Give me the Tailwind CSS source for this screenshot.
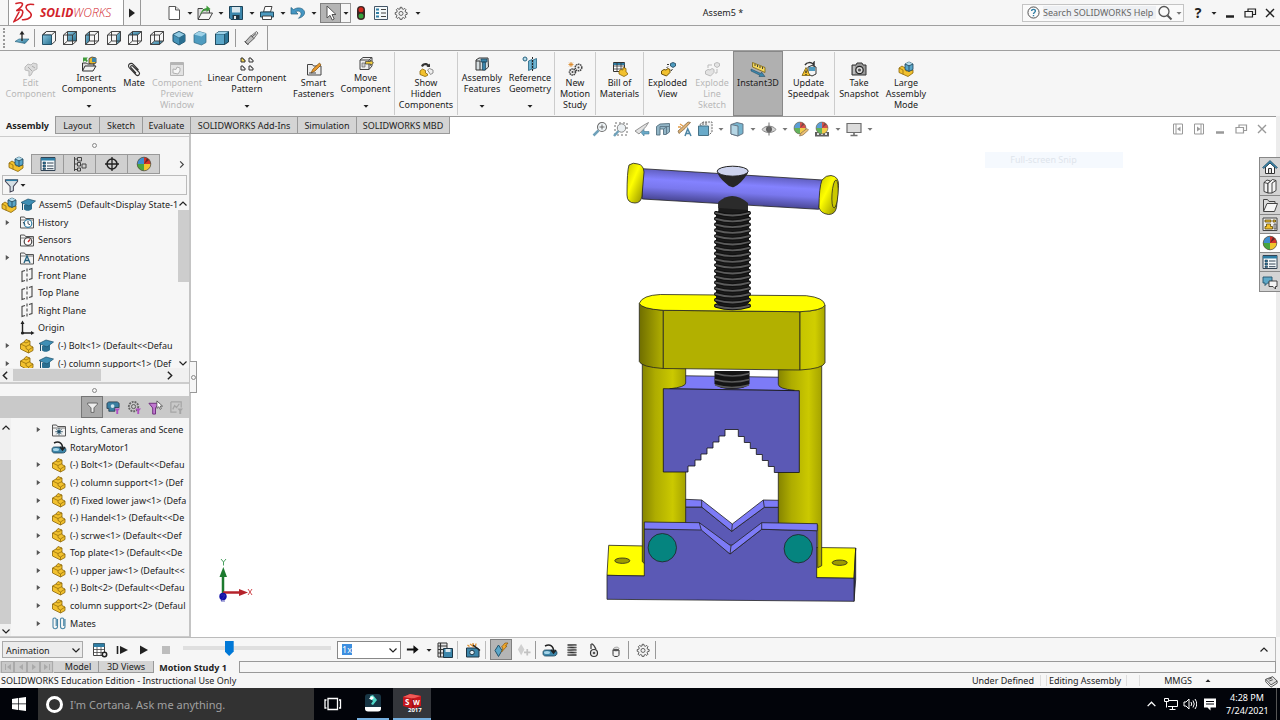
<!DOCTYPE html>
<html lang="en">
  <head>
    <meta charset="UTF-8" />
    <meta name="viewport" content="width=device-width, initial-scale=1.0" />
    <script src="https://cdn.jsdelivr.net/npm/@tailwindcss/browser@4"></script>
    <title>SOLIDWORKS | Assem5</title>
  </head>
  <body class="h-screen flex flex-col overflow-hidden bg-[#f6f6f6] text-[9px] leading-[11px] text-[#222] font-['Noto_Sans','Open_Sans',sans-serif]">

    <!-- icon sprite -->
    <svg class="absolute size-0" xmlns="http://www.w3.org/2000/svg">
      <defs>
        <linearGradient id="blue" x1="0" y1="0" x2="1" y2="1"><stop offset="0" stop-color="#8cc8e2" /><stop offset="1" stop-color="#27708f" /></linearGradient>
        <linearGradient id="col" x1="0" x2="1"><stop offset="0" stop-color="#858400" /><stop offset=".3" stop-color="#aeac00" /><stop offset=".7" stop-color="#cbc900" /><stop offset="1" stop-color="#a5a300" /></linearGradient>
        <linearGradient id="plateL" x1="0" x2="1"><stop offset="0" stop-color="#6f6e00" /><stop offset="1" stop-color="#b2b000" /></linearGradient>
        <linearGradient id="plateR" x1="0" x2="1"><stop offset="0" stop-color="#c6c400" /><stop offset=".6" stop-color="#d0ce00" /><stop offset="1" stop-color="#a9a700" /></linearGradient>
        <linearGradient id="bar" gradientUnits="userSpaceOnUse" x1="734" y1="173" x2="732" y2="205"><stop offset="0" stop-color="#5c5ab8" /><stop offset=".35" stop-color="#8482ff" /><stop offset=".6" stop-color="#7a78ee" /><stop offset="1" stop-color="#45438e" /></linearGradient>
        <linearGradient id="cap" x1="0" y1="0" x2="1" y2="1"><stop offset="0" stop-color="#c8c600" /><stop offset=".4" stop-color="#ffff00" /><stop offset="1" stop-color="#8a8800" /></linearGradient>
      </defs>

      <symbol id="down" viewBox="0 0 8 8"><path d="M1.500 3h5L4 5.800z" fill="currentColor" /></symbol>
      <symbol id="tri" viewBox="0 0 8 8"><path d="M2 1v6l4-3z" fill="currentColor" /></symbol>
      <symbol id="chev-down" viewBox="0 0 10 10"><path d="M1.500 3.500 5 7l3.500-3.500" fill="none" stroke="currentColor" stroke-width="1.200" /></symbol>
      <symbol id="chev-up" viewBox="0 0 10 10"><path d="M1.500 6.500 5 3l3.500 3.500" fill="none" stroke="currentColor" stroke-width="1.200" /></symbol>
      <symbol id="chev-left" viewBox="0 0 10 10"><path d="M6.500 1.500 3 5l3.500 3.500" fill="none" stroke="currentColor" stroke-width="1.300" /></symbol>
      <symbol id="chev-right" viewBox="0 0 10 10"><path d="M3.500 1.500 7 5 3.500 8.500" fill="none" stroke="currentColor" stroke-width="1.300" /></symbol>

      <!-- standard toolbar -->
      <symbol id="new" viewBox="0 0 16 16"><path d="M3 1.500h6.500L13.500 5v9.500H3z" fill="#fff" stroke="#555" /><path d="M9.500 1.500V5h4" fill="#ddd" stroke="#555" /></symbol>
      <symbol id="open" viewBox="0 0 16 16"><path d="M1 14V3.500h4.500L7 5h5.500v3" fill="#ddd" stroke="#444" /><path d="M1 14.500 4.500 8H15.500L12 14.500z" fill="#f4f4f4" stroke="#444" /><path d="M3 10c1-4 3-6.500 6.500-7V.5L13.500 4 9.500 7V5C7 5.200 5 7 3 10z" fill="#3f9b3b" /></symbol>
      <symbol id="save" viewBox="0 0 16 16"><path d="M1.500 1.500h13v13H3l-1.500-1.500z" fill="#3c86ab" stroke="#1d4358" /><path d="M4 2h8v5.500H4z" fill="#d8e7ee" /><path d="M4.500 10h7v4h-7z" fill="#1e3745" /><path d="M6 11h2v3H6z" fill="#e8e8e8" /></symbol>
      <symbol id="print" viewBox="0 0 16 16"><path d="M4.500 7 6 1.500h7L11.500 7z" fill="#fff" stroke="#444" /><path d="M1.500 7h13v5h-13z" fill="#4d9bc0" stroke="#224b5f" /><path d="M3.500 11h9v3.500h-9z" fill="#fff" stroke="#444" /></symbol>
      <symbol id="undo" viewBox="0 0 16 16"><path d="M1 2.500v6.500h7L5.700 6.700c3-1.700 6.300.3 5.300 3.300-.4 1.200-1.400 2.300-2.500 3.300 4-1 6.500-3.500 6-6.500C13.500 3 8 1.500 3.500 4.600z" fill="#4597c4" stroke="#23607f" stroke-width=".7" /></symbol>
      <symbol id="cursor" viewBox="0 0 16 16"><path d="M4 1v12l3-2.700 2.200 4.700 2-1-2.200-4.500H13z" fill="#fff" stroke="#555" /></symbol>
      <symbol id="light" viewBox="0 0 16 16"><rect x="4" y="1" width="8" height="14" rx="4" fill="#3b2523" /><circle cx="8" cy="4.700" r="2.500" fill="#d5281d" /><circle cx="8" cy="11" r="2.500" fill="#35a23c" /></symbol>
      <symbol id="props" viewBox="0 0 16 16"><path d="M1.500 1.500h13v13h-13z" fill="#f4f9fb" stroke="#456" /><path d="M3 3.500h3v2H3zM3 7h3v2H3zM3 10.500h3v2H3z" fill="#2f7ea5" /><path d="M8 4.500h5M8 8h5M8 11.500h5" stroke="#444" /></symbol>
      <symbol id="gear" viewBox="0 0 16 16"><path d="M7 1.500h2l.4 1.800 1.300.5 1.600-1 1.400 1.400-1 1.600.5 1.300 1.800.4v2l-1.800.4-.5 1.300 1 1.600-1.400 1.400-1.600-1-1.300.5-.4 1.800H7l-.4-1.800-1.300-.5-1.600 1-1.400-1.400 1-1.600-.5-1.300L1.400 9.500v-2l1.800-.4.500-1.300-1-1.600 1.400-1.400 1.600 1 1.300-.5z" fill="#f1f1f1" stroke="#555" stroke-width="1.100" /><circle cx="8" cy="8.500" r="2.300" fill="none" stroke="#555" /></symbol>

      <!-- view cubes -->
      <symbol id="normal" viewBox="0 0 16 16"><path d="M1 11.500 5 9h10l-4 4.500z" fill="url(#blue)" stroke="#1f5a76" stroke-width=".6" /><path d="M8 11V3" stroke="#222" stroke-width="1.300" /><path d="M5.500 4.500 8 .8l2.500 3.700z" fill="#222" /></symbol>
      <symbol id="wire" viewBox="0 0 16 16"><path d="M1.500 5h9v9.500h-9zM5.500 1.500h9V11h-9zM1.500 5l4-3.500M10.500 5l4-3.500M10.500 14.500l4-3.500M1.500 14.500l4-3.500" fill="none" stroke="#333" stroke-width=".9" /></symbol>
      <symbol id="cube-front" viewBox="0 0 16 16"><path d="M5.500 1.500h9V11l-4 3.500V5h-9z" fill="none" stroke="#333" stroke-width=".9" /><path d="M1.500 5h9v9.500h-9z" fill="url(#blue)" stroke="#24536b" /><path d="M1.500 5l4-3.500M10.500 5l4-3.500" stroke="#333" stroke-width=".9" /></symbol>
      <symbol id="cube-back" viewBox="0 0 16 16"><path d="M5.500 1.500h9V11h-9z" fill="url(#blue)" /><use href="#wire" /></symbol>
      <symbol id="cube-left" viewBox="0 0 16 16"><path d="M1.500 5l4-3.500V11l-4 3.500z" fill="url(#blue)" /><use href="#wire" /></symbol>
      <symbol id="cube-right" viewBox="0 0 16 16"><path d="M10.500 5l4-3.500V11l-4 3.500z" fill="url(#blue)" /><use href="#wire" /></symbol>
      <symbol id="cube-top" viewBox="0 0 16 16"><path d="M1.500 5l4-3.500h9L10.500 5z" fill="url(#blue)" /><use href="#wire" /></symbol>
      <symbol id="cube-bottom" viewBox="0 0 16 16"><path d="M1.500 14.500l4-3.500h9l-4 3.500z" fill="url(#blue)" /><use href="#wire" /></symbol>
      <symbol id="cube-iso" viewBox="0 0 16 16"><path d="M8 1.500 14 4.500v7L8 15l-6-3.500v-7z" fill="#4593b8" stroke="#1f4f68" /><path d="M8 1.500 14 4.500 8 8 2 4.500z" fill="#92cbe4" stroke="#1f4f68" stroke-width=".6" /><path d="M8 8v7l6-3.500v-7z" fill="#2a6f91" /></symbol>
      <symbol id="cube-tri" viewBox="0 0 16 16"><path d="M7 1.500 14 3.500v9L9.500 15 2 12.500v-8z" fill="#4f9cc0" stroke="#2d647e" stroke-width=".7" /><path d="M7 1.500 14 3.500 9.500 6.500 2 4.500z" fill="#9ed2e8" /></symbol>
      <symbol id="cube-di" viewBox="0 0 16 16"><path d="M5 1.500h9.500V12l-4 2.500h-9V4z" fill="#2d7596" stroke="#173c4e" /><path d="M1.500 4h9v10.500h-9z" fill="#5aa6c8" stroke="#173c4e" stroke-width=".7" /><path d="M5 1.500h9.500L10.500 4h-9z" fill="#9ed2e8" /></symbol>
      <symbol id="torch" viewBox="0 0 16 16"><path d="M8 6 13.500 1.500 15 3 10.500 9z" fill="#ddd" stroke="#555" stroke-width=".8" /><path d="M8 5.500 11 8.500 4.500 14.500 2 12z" fill="#bbb" stroke="#444" stroke-width=".8" /><path d="M1.500 11l4 4M9 7l4-3.500" stroke="#555" /></symbol>

      <!-- parts -->
      <symbol id="part" viewBox="0 0 16 16"><path d="M1.500 6 5 4l2-2.500 4 1.500v4.500l3 1.500v3.500L9.500 15 1.500 11z" fill="#f2c12e" stroke="#8a6508" stroke-width=".8" /><path d="M1.500 6 7 8.500v2L9.500 12l4.500-3M9.500 12v3M7 8.500 11 6.500M5 4l2 1 4-2" fill="none" stroke="#8a6508" stroke-width=".7" /></symbol>
      <symbol id="asm" viewBox="0 0 16 16"><path d="M1 7 4 5l4 2.500V10l7-1v3l-5 3.500L1 11.500z" fill="#f2c12e" stroke="#8a6508" stroke-width=".8" /><path d="M7 3l4-2 4 2v5.500l-4 2-4-2z" fill="#5aa6c8" stroke="#1d4358" stroke-width=".8" /><path d="M7 3l4-2 4 2-4 1.800z" fill="#b5dcec" /><path d="M7 3l4 1.800L15 3M11 4.800v5.700" fill="none" stroke="#1d4358" stroke-width=".8" /><path d="M1 7l4 2v4.300" fill="none" stroke="#8a6508" stroke-width=".7" /></symbol>
      <symbol id="hat" viewBox="0 0 16 16"><path d="M4 8v4.500c2.500 2 6 1.500 8-.5V7z" fill="#2a6f91" /><path d="M1 5.500 8 2l7.500 2L9 9z" fill="#3f8fb5" stroke="#1a4d68" stroke-width=".7" /><path d="M2.500 6.200V13" stroke="#1a4d68" /></symbol>
      <symbol id="folder" viewBox="0 0 16 16"><path d="M1.500 14V3h4l1 1.500h8V14z" fill="#f4f4f4" stroke="#555" /><path d="M1.500 6h13" stroke="#555" stroke-width=".8" /></symbol>
      <symbol id="history" viewBox="0 0 16 16"><use href="#folder" /><circle cx="9" cy="9.500" r="3.800" fill="#fff" stroke="#2f7ea5" stroke-width="1.200" /><path d="M9 7v2.700l2 1M4 8l2 2.500" stroke="#234" stroke-width=".9" fill="none" /></symbol>
      <symbol id="sensors" viewBox="0 0 16 16"><use href="#folder" /><circle cx="9" cy="9.500" r="3.800" fill="#fff" stroke="#444" stroke-width="1.200" /><path d="M9 10l2-2.500" stroke="#c22" stroke-width="1.300" /></symbol>
      <symbol id="annot" viewBox="0 0 16 16"><use href="#folder" /><path d="M5 13l3-7 3 7M6.200 10.500h3.700" stroke="#24627f" stroke-width="1.300" fill="none" /></symbol>
      <symbol id="lights" viewBox="0 0 16 16"><use href="#folder" /><circle cx="8" cy="9.700" r="1.700" fill="#2f7ea5" /><path d="M8 6v7.500M4.300 9.700h7.500M5.400 7.100l5.200 5.200M10.600 7.100l-5.200 5.200" stroke="#24475a" stroke-width=".8" /></symbol>
      <symbol id="plane" viewBox="0 0 16 16"><path d="M6 3.500 3 4.500v10l3-1M10 2.500l3-1v10l-3 1M8 1.500v3M8 6.500v3M8 11.500v3" fill="none" stroke="#444" stroke-width="1.100" /></symbol>
      <symbol id="origin" viewBox="0 0 16 16"><path d="M3.500 3v10H14" fill="none" stroke="#222" stroke-width="1.400" /><path d="M1.500 4 3.500.5l2 3.500zM12 11l3.500 2-3.500 2z" fill="#222" /><circle cx="3.500" cy="13" r="1.600" fill="#222" /></symbol>
      <symbol id="motor" viewBox="0 0 16 16"><path d="M1 10.500c0-1.600 1-2.500 2.500-2.500h8c2 0 3.500 1 3.500 3s-1.500 3-3.500 3h-8C2 14 1 13 1 11.500z" fill="#3d87ab" stroke="#1d4358" stroke-width=".8" /><ellipse cx="5" cy="10.500" rx="3" ry="1.500" fill="#a5d4e8" /><path d="M3 4c5-2.500 9 0 8.500 6M9 8l2.500 3L14 8" fill="none" stroke="#222" stroke-width="1.500" /></symbol>
      <symbol id="mates" viewBox="0 0 16 16"><path d="M6.500 4v7.500a2 2 0 0 1-4.500 0V4a1.800 1.800 0 0 1 3.200 0v7M14 4v7.500a2 2 0 0 1-4.500 0V4a1.800 1.800 0 0 1 3.200 0v7" fill="none" stroke="#4a86a6" stroke-width="1.100" /></symbol>
      <symbol id="config" viewBox="0 0 16 16"><path d="M2.500 1v14M2.500 3h3M2.500 8h3M2.500 13.500h3M5.500 1.500h4V5h-4zM5.500 6.500h3V10h-3zM10 8h4v4h-4zM5.500 12h3v3h-3z" fill="none" stroke="#444" /></symbol>
      <symbol id="target" viewBox="0 0 16 16"><circle cx="8" cy="8" r="5" fill="none" stroke="#222" stroke-width="1.500" /><path d="M8 1v14M1 8h14" stroke="#222" stroke-width="1.300" /></symbol>
      <symbol id="ball" viewBox="0 0 16 16"><circle cx="8" cy="8" r="6.800" fill="#f0c42c" /><path d="M8 8V1.200A6.800 6.800 0 0 0 1.200 8z" fill="#3f8ed0" /><path d="M8 8V1.200A6.800 6.800 0 0 1 14.800 8z" fill="#d3312b" /><path d="M8 8H1.200A6.800 6.800 0 0 0 8 14.800z" fill="#4aa63f" /><path d="M8 8l3-6 2 2z" fill="#222" opacity=".6" /><circle cx="8" cy="8" r="6.800" fill="none" stroke="#444" stroke-width=".7" /></symbol>
      <symbol id="funnel" viewBox="0 0 16 16"><path d="M1.500 2h13v1.500L10 9v4.500L6.500 15V9L1.500 3.500z" fill="#d5dfe4" stroke="#445" stroke-width="1.100" /><path d="M2 2.500h12" stroke="#2f7ea5" stroke-width="1.500" /></symbol>
      <symbol id="funnel-plain" viewBox="0 0 16 16"><path d="M2 2.500h12V4L9.800 8.500V14H6.200V8.500L2 4z" fill="#eee" stroke="#555" /></symbol>
      <symbol id="funnel-key" viewBox="0 0 16 16"><path d="M1 3.500 3 2h9l2 1.500V8H9.500v4H3V9H1z" fill="#3a7fa2" stroke="#234" stroke-width=".8" /><circle cx="7" cy="6.500" r="2" fill="#cfe5ef" /><path d="M9 9h6l-2 2.500V15h-2v-3.500z" fill="#b14fc4" /></symbol>
      <symbol id="funnel-gear" viewBox="0 0 16 16"><circle cx="7" cy="7" r="5" fill="none" stroke="#666" stroke-width="2" stroke-dasharray="2 1" /><circle cx="7" cy="7" r="2.200" fill="none" stroke="#555" /><path d="M9 9h6l-2 2.500V15h-2v-3.500z" fill="#b14fc4" /></symbol>
      <symbol id="funnel-sel" viewBox="0 0 16 16"><path d="M1 3.500h11L8 8.500V15H5V8.500z" fill="#c079d0" stroke="#6d2b7c" /><path d="M9.500 1v8l2-1.800L13 10l1.200-.8L13 6.500h2.500z" fill="#fff" stroke="#444" stroke-width=".8" /></symbol>
      <symbol id="funnel-off" viewBox="0 0 16 16"><path d="M2 2h11v6M2 2v11h6M4 10l2-4 2 2 3-4" fill="none" stroke="#a5a5a5" stroke-width="1.300" /><path d="M9 9h6l-2 2.500V15h-2v-3.500z" fill="#a5a5a5" /></symbol>

      <!-- ribbon -->
      <symbol id="r-edit" viewBox="0 0 16 16"><path d="M2 6l3-3 3 1 2-2 4 1v5l-4 2-2 4-2 1V10L2 9z" fill="#dcdcdc" stroke="#bbb" /><path d="M5 6l4 4M9 5l3 2" stroke="#aaa" /></symbol>
      <symbol id="r-insert" viewBox="0 0 16 16"><path d="M8 2.500l3-1.500 4 1v5l-4 1.500-3-1z" fill="#e9b92c" stroke="#333" stroke-width=".8" /><path d="M11 2h4v4h-4z" fill="#3c86ab" /><path d="M1.500 15V7h4l1 1H13v2" fill="#ddd" stroke="#333" /><path d="M1.500 15 4 10h11l-3 5z" fill="#f2f2f2" stroke="#333" /><path d="M2 1.500h5L5.500 3 7 5 5.500 6 4 4.500 2 6z" fill="#3f9b3b" /></symbol>
      <symbol id="r-mate" viewBox="0 0 16 16"><path d="M12.500 9 7 3.200a2.500 2.500 0 0 0-3.800 3.400l7 7.400a2 2 0 0 0 3-2.600L6.500 4.800a1.200 1.200 0 0 0-1.700 1.600l5.200 5.700" fill="none" stroke="#333" stroke-width="1.100" /></symbol>
      <symbol id="r-preview" viewBox="0 0 16 16"><path d="M1.500 1.500h13v13h-13z" fill="#e3e3e3" stroke="#b5b5b5" /><path d="M1.500 3h13" stroke="#b5b5b5" stroke-width="2" /><path d="M4 8l3 .5 1-2.500 3 1v3l-2 3-5-1z" fill="#f6f6f6" stroke="#b0b0b0" /></symbol>
      <symbol id="r-linear" viewBox="0 0 16 16"><path d="M2 2v4h4V4L4.500 3.500 4 2z" fill="#f0d250" stroke="#333" /><path d="M10 2v4h4V4l-1.500-.5L12 2zM2 10v4h4v-2l-1.500-.5L4 10zM10 10v4h4v-2l-1.500-.5L12 10z" fill="#eee" stroke="#333" /></symbol>
      <symbol id="r-smart" viewBox="0 0 16 16"><path d="M1.500 14V3.500h5l1 1.500H15v9z" fill="#eee" stroke="#444" /><path d="M13.500 2 7 8l-2 4 4-2 6-6z" fill="#e99a2e" stroke="#7a4a08" stroke-width=".7" /><path d="M3 12h7" stroke="#444" /></symbol>
      <symbol id="r-move" viewBox="0 0 16 16"><path d="M2 4l3-2.500h9V10l-3 3.500H2z" fill="#eee" stroke="#444" /><path d="M2 4h9v9.500M11 4l3-2.500" fill="none" stroke="#444" /><path d="M4 7h3v4H4z" fill="#ccc" stroke="#666" stroke-width=".7" /><path d="M7.500 5.500h5V4l3 3-3 2.500V8h-5z" fill="#f0cc3e" stroke="#333" stroke-width=".7" /></symbol>
      <symbol id="r-show" viewBox="0 0 16 16"><path d="M3 5c1-3.500 6-4 8-1.500l1-1V6H8.500l1-1C8 3.500 5.500 4 5 6z" fill="#333" /><path d="M2 10l2.500-2 3 1.500V12l2 1v1.500L7 15.500 2 13.500z" fill="#f2c12e" stroke="#8a6508" stroke-width=".8" /><path d="M9.500 9l2-1.500L15 9v3l-2.500 1.500z" fill="#eee" stroke="#777" stroke-width=".8" /></symbol>
      <symbol id="r-feat" viewBox="0 0 16 16"><path d="M2 4l3-2h9l.5 9-3.500 3H2z" fill="#d5dde0" stroke="#333" /><path d="M7 3h6v3H7zM8.500 6h3v8h-3z" fill="#3c86ab" stroke="#1d4358" stroke-width=".7" /><path d="M2 5h4v9" fill="none" stroke="#333" /></symbol>
      <symbol id="r-ref" viewBox="0 0 16 16"><circle cx="3" cy="3" r="2" fill="#b9dcea" stroke="#24627f" /><path d="M6.500 5 10 3.500V13l-3.500 1.500zM11 4l3.500-1.500V12L11 13z" fill="#6fb4d2" stroke="#24627f" stroke-width=".8" /><path d="M10.500 1v14" stroke="#222" stroke-dasharray="2 1" /></symbol>
      <symbol id="r-motion" viewBox="0 0 16 16"><circle cx="5.500" cy="11" r="3" fill="#eee" stroke="#444" stroke-width="1.600" stroke-dasharray="1.500 .6" /><circle cx="11.500" cy="6.500" r="3.300" fill="#eee" stroke="#444" stroke-width="1.500" stroke-dasharray="1.500 .6" /><circle cx="11.500" cy="6.500" r="1" fill="#444" /><circle cx="5.500" cy="11" r="1" fill="#444" /><path d="M4 1v5M1.500 3.500h5M2.200 1.700l3.600 3.600M5.800 1.700 2.200 5.300" stroke="#dd8a2a" stroke-width=".9" /></symbol>
      <symbol id="r-bom" viewBox="0 0 16 16"><path d="M1.500 1.500h11v9h-11z" fill="#fff" stroke="#333" /><path d="M1.500 2h11v2h-11z" fill="#2f7ea5" /><path d="M1.500 5h11M1.500 8h11M5 2v8M9 2v8" stroke="#333" stroke-width=".8" /><path d="M7 10l2-1.500 2 .5V6.500l3 1V11l1.500 1v1.500L12 15.500 7 13z" fill="#f2c12e" stroke="#8a6508" stroke-width=".8" /></symbol>
      <symbol id="r-expl" viewBox="0 0 16 16"><path d="M1.500 10 4 8.500l2 .5 2-1.500 2 1v3L6.500 15 1.500 13z" fill="#f2c12e" stroke="#6c5008" /><path d="M10.500 2.500l2.500-1 2.500 1V5L13 6.500 10.500 5z" fill="#4f9cc0" stroke="#1d4358" stroke-width=".8" /><path d="M8 5.500 6.500 7M12.500 8l-1.500 2M9 3.500H7" stroke="#333" /></symbol>
      <symbol id="r-expl-off" viewBox="0 0 16 16"><path d="M1.500 10 4 8.500l2 .5 2-1.500 2 1v3L6.500 15 1.500 13z" fill="#e3e3e3" stroke="#bbb" /><path d="M10.500 2.500l2.500-1 2.500 1V5L13 6.500 10.500 5z" fill="#e3e3e3" stroke="#bbb" /><path d="M4 7V4h4M11 12h2V8" fill="none" stroke="#bbb" /></symbol>
      <symbol id="r-instant" viewBox="0 0 16 16"><path d="M2.500 1.500 15 6.500v5L2.500 6z" fill="#f3d65d" stroke="#7a6210" stroke-width=".8" /><path d="M5 3v2M7.500 4v2M10 5v2M12.500 6v2" stroke="#333" stroke-width=".9" /><path d="M1 8l10 4.500.5-1.500 3.500 4.500-6 .2.700-1.500L1 10z" fill="#3c86ab" stroke="#1d4358" stroke-width=".5" /></symbol>
      <symbol id="r-speed" viewBox="0 0 16 16"><path d="M4 4c2-3 6-3 8-1l1-1.500V5.500H9.500" fill="none" stroke="#333" stroke-width="1.500" /><path d="M7 6l4-1.500L15 6v7l-4 2-4-2z" fill="#f4f4f4" stroke="#333" /><path d="M8 6h6v4H8z" fill="#4f9cc0" /><path d="M1 14.500 5 6.500l4 8z" fill="#f2c12e" stroke="#7a6210" stroke-width=".8" /><path d="M5 9.500v2.500M5 13v1" stroke="#222" stroke-width="1.200" /></symbol>
      <symbol id="r-snap" viewBox="0 0 16 16"><path d="M1 4h4l1-2h5l1 2h3v10H1z" fill="#999" stroke="#333" /><circle cx="8.500" cy="9" r="3.700" fill="#ddd" stroke="#222" stroke-width="1.200" /><circle cx="8.500" cy="9" r="1.600" fill="#555" /><path d="M3 5v8" stroke="#ddd" /></symbol>

      <!-- heads-up view toolbar -->
      <symbol id="h-zoom" viewBox="0 0 16 16"><circle cx="10" cy="6" r="4.500" fill="#eef5f8" stroke="#555" stroke-width="1.100" /><path d="M10 3.500v5M7.500 6h5" stroke="#444" stroke-width=".9" /><path d="M6.500 9.500 1.500 14.500" stroke="#5791ae" stroke-width="2.500" /></symbol>
      <symbol id="h-area" viewBox="0 0 16 16"><path d="M2 2h12v12H2z" fill="none" stroke="#555" stroke-dasharray="2 2" /><circle cx="8.500" cy="7" r="4.200" fill="#e8eef1" stroke="#777" /><path d="M5.500 10 1 15" stroke="#5791ae" stroke-width="2.500" /></symbol>
      <symbol id="h-prev" viewBox="0 0 16 16"><path d="M1 10 10 4l4.500-2.500L12 5.500 5 13z" fill="#ddd" stroke="#666" stroke-width=".8" /><path d="M7 11.500l3-3v2h5v2.500h-5v2z" fill="#4f9cc0" stroke="#24627f" stroke-width=".6" /></symbol>
      <symbol id="h-section" viewBox="0 0 16 16"><path d="M1.500 5.500 5 3l9.500-.5V11l-3.500 2.500H8.500V8H5v6H1.500z" fill="#7fa9bd" stroke="#37576a" stroke-width=".9" /><path d="M8.500 8l3-2v7M5 8V5.500h9" fill="none" stroke="#37576a" stroke-width=".8" /></symbol>
      <symbol id="h-dyn" viewBox="0 0 16 16"><path d="M2 10 12 1l2.500.5L9 7.500l-6 5z" fill="#d9a35a" stroke="#72562d" stroke-width=".8" /><path d="M4 3l3 2M2 6h3" stroke="#e08b24" stroke-width="1.300" /><path d="M9 15l2.700-7L15 15M10 12.500h4" fill="none" stroke="#2f7095" stroke-width="1.500" /></symbol>
      <symbol id="h-style" viewBox="0 0 16 16"><path d="M3 3.500 6 1h9v10l-3 3z" fill="#f4f4f4" stroke="#555" stroke-dasharray="2 1" /><path d="M1.500 5h10v9.500h-10z" fill="#4f9cc0" stroke="#275970" /><path d="M6 1v3M9 1v3" stroke="#444" /></symbol>
      <symbol id="h-shade" viewBox="0 0 16 16"><path d="M2 3.500 8 1.500l6 1.500v9.500l-5 2.500-7-2z" fill="#5fa7c6" stroke="#456" stroke-width=".9" /><path d="M2 3.500l7 1.500v10l-7-2z" fill="#a9d0e1" stroke="#456" stroke-width=".9" /></symbol>
      <symbol id="h-eye" viewBox="0 0 16 16"><path d="M1 8.500c3-4.500 11-4.500 14 0-3 4-11 4-14 0z" fill="#ccc" stroke="#777" /><circle cx="8" cy="8.200" r="3" fill="#444" /><path d="M8 1.500v13" stroke="#555" /></symbol>
      <symbol id="h-paint" viewBox="0 0 16 16"><use href="#ball" width="14" height="14" /><path d="M14 7.500 8 12l-1.500 3L10 14l5.500-5z" fill="#e9b45a" stroke="#72562d" stroke-width=".7" /></symbol>
      <symbol id="h-scene" viewBox="0 0 16 16"><path d="M1 11h14v4.500H1z" fill="#444" /><path d="M3 12h2v2H3zM7 12h2v2H7zM11 12h2v2h-2z" fill="#ddd" /><use href="#ball" x="1" width="14" height="14" /></symbol>
      <symbol id="h-monitor" viewBox="0 0 16 16"><path d="M1 2.500h14v9H1z" fill="#d6d6d6" stroke="#555" stroke-width="1.200" /><path d="M8 11.500v2.500M4.500 14.500h7" stroke="#555" stroke-width="1.600" /></symbol>

      <!-- window buttons -->
      <symbol id="w-min" viewBox="0 0 16 16"><path d="M4 11.500h8" stroke="currentColor" stroke-width="2.500" /></symbol>
      <symbol id="w-restore" viewBox="0 0 16 16"><path d="M3 6.500h7.500V12H3zM6 6.500V4h7.500v5.500h-3" fill="none" stroke="currentColor" stroke-width="1.200" /></symbol>
      <symbol id="w-close" viewBox="0 0 16 16"><path d="M4 4l8 8M12 4l-8 8" stroke="currentColor" stroke-width="1.400" /></symbol>
      <symbol id="w-left" viewBox="0 0 16 16"><path d="M3.500 3h9v10h-9zM6 3v10" fill="none" stroke="currentColor" /><path d="M10.500 5.500v5L7 8z" fill="currentColor" /></symbol>
      <symbol id="w-right" viewBox="0 0 16 16"><path d="M3.500 3h9v10h-9zM10 3v10" fill="none" stroke="currentColor" /><path d="M6 5.500v5L9.500 8z" fill="currentColor" /></symbol>

      <!-- task pane -->
      <symbol id="t-home" viewBox="0 0 16 16"><path d="M3.500 8v6.500h9V8L8 4z" fill="#fff" stroke="#333" /><path d="M6.500 14V9.500h3V14" fill="#ddd" stroke="#333" /><path d="M.5 8.500 8 1.500l7.500 7-1.200 1L8 4 1.700 9.500z" fill="#3c86ab" stroke="#1d4358" stroke-width=".6" /></symbol>
      <symbol id="t-lib" viewBox="0 0 16 16"><path d="M2 4.500 5 2l3.500 1v10L6 15l-4-1.500zM2 4.500l4 1V15M6 5.500 8.500 3" fill="#f4f4f4" stroke="#333" stroke-width=".9" /><path d="M6 5.500 10.500 1.500 14 2.500v10L10 15 6 15zM10 5v10M10 5l4-2.500" fill="#f4f4f4" stroke="#333" stroke-width=".9" /></symbol>
      <symbol id="t-folder" viewBox="0 0 16 16"><path d="M1.500 14V2.500h4L7 4.500h6v2" fill="#ddd" stroke="#444" /><path d="M1.500 14.500 5 6.500h10.500L12.500 14.500z" fill="#f6f6f6" stroke="#444" /></symbol>
      <symbol id="t-palette" viewBox="0 0 16 16"><path d="M1 2h14v12.500H1z" fill="#eee" stroke="#444" /><path d="M3 4h6v2H3zM11 4h2.500v2H11zM4.500 8h4v2.500h2V13H3v-2.500h1.500z" fill="#f2c12e" stroke="#5d4a0c" stroke-width=".8" /><path d="M12 8h2v5h-2z" fill="#ddd" stroke="#444" stroke-width=".8" /></symbol>
      <symbol id="t-props" viewBox="0 0 16 16"><path d="M1 1.500h14v13H1z" fill="#f4f9fb" stroke="#345" /><path d="M1 2h14v2.500H1z" fill="#2f7ea5" /><path d="M3 6h2.500v2H3zM3 9h2.500v2H3zM3 12h2.500v1.500H3z" fill="#2f7ea5" stroke="#123" stroke-width=".5" /><path d="M7 7h6.500M7 10h6.500M7 12.700h6.500" stroke="#345" /></symbol>
      <symbol id="t-chat" viewBox="0 0 16 16"><path d="M1 3h9v6H5.500L3 11.500V9H1z" fill="#5fa9c8" stroke="#24536b" stroke-width=".9" /><path d="M7 7h8v5.500h-1.500V15L11 12.500H7z" fill="#f4f4f4" stroke="#333" stroke-width=".9" /></symbol>

      <!-- motion study toolbar -->
      <symbol id="m-calc" viewBox="0 0 16 16"><path d="M1.500 1.500h11v12h-11z" fill="#fff" stroke="#444" /><path d="M1.500 1.500h11V5h-11z" fill="#2f7ea5" /><path d="M1.500 7.500h11M1.500 10.500h11M5 5v8.500M9 5v8.500" stroke="#444" stroke-width=".8" /><circle cx="12.500" cy="12.500" r="2.200" fill="#eee" stroke="#222" stroke-width="1.500" /></symbol>
      <symbol id="m-start" viewBox="0 0 16 16"><path d="M3.500 4v8" stroke="#222" stroke-width="1.600" /><path d="M6 4v8l8-4z" fill="#222" /></symbol>
      <symbol id="m-play" viewBox="0 0 16 16"><path d="M4 3.500v9L12 8z" fill="#222" /></symbol>
      <symbol id="m-stop" viewBox="0 0 16 16"><path d="M4 4h8v8H4z" fill="#bdbdbd" /></symbol>
      <symbol id="m-arrow" viewBox="0 0 16 16"><path d="M2 7h7V3.500L14.500 8 9 12.500V9H2z" fill="#111" /></symbol>
      <symbol id="m-film" viewBox="0 0 16 16"><path d="M1 1h9v14H1z" fill="#e6e6e6" stroke="#333" /><path d="M3.500 1v14M1 4h9M1 7.500h9M1 11h9" stroke="#333" stroke-width="1.200" /><path d="M6.500 6.500h9v9h-9z" fill="#3c86ab" stroke="#1d3545" /><path d="M8.500 7h5v3h-5z" fill="#dbe8ee" /></symbol>
      <symbol id="m-wiz" viewBox="0 0 16 16"><path d="M1.500 6h11l1.500 1.500V15H1.500z" fill="#3c86ab" stroke="#1d3545" /><circle cx="7" cy="10.500" r="2.300" fill="#e2eff5" stroke="#1d3545" /><path d="M5 2l4 3M2.500 3l2 1.500M11 1.500l-.5 3M8 1v2" stroke="#de8d2a" stroke-width="1.300" /><path d="M8 3l7 5.500" stroke="#222" stroke-width="1.500" /></symbol>
      <symbol id="m-key" viewBox="0 0 16 16"><path d="M5.500 3 9 8.500 5.500 14.500 2 8.500z" fill="#5aa6c8" stroke="#24536b" /><path d="M8.500 5 12 1h3l-2.500 3H14L8.500 10 10 6z" fill="#f1a92f" stroke="#8a5608" stroke-width=".7" /></symbol>
      <symbol id="m-addkey" viewBox="0 0 16 16"><path d="M5.500 2 9 8l-3.500 6L2 8z" fill="#d0d0d0" /><path d="M12 7.500v7M8.500 11h7" stroke="#c2c2c2" stroke-width="1.800" /></symbol>
      <symbol id="m-spring" viewBox="0 0 16 16"><path d="M3.500 3h9M3.500 5.500h9M3.500 8h9M3.500 10.500h9M3.500 13h9" stroke="#333" stroke-width="1.300" /><path d="M12.500 3l-9 2.500M12.500 5.500l-9 2.500M12.500 8l-9 2.500M12.500 10.500l-9 2.500" stroke="#999" stroke-width=".6" /></symbol>
      <symbol id="m-damp" viewBox="0 0 16 16"><circle cx="8" cy="11" r="3.500" fill="#eee" stroke="#333" stroke-width="1.200" /><circle cx="8" cy="11" r="1.300" fill="#555" /><path d="M5.500 1.500c2 1 3.500 3 4.500 6M5 2v5" fill="none" stroke="#444" stroke-width="1.300" /></symbol>
      <symbol id="m-grav" viewBox="0 0 16 16"><path d="M5 8h6v4.500c0 1.500-1 2-3 2s-3-.5-3-2z" fill="#f4f4f4" stroke="#333" /><path d="M5 8c0-3 6-4 6-1" fill="none" stroke="#999" /><ellipse cx="8" cy="8" rx="3" ry="1.200" fill="#555" /></symbol>
      <symbol id="brush" viewBox="0 0 16 16"><path d="M2 6 10 3l5 5-7 4.500z" fill="#ddd" stroke="#444" /><path d="M2 6v3l6 6 7-4.500V8M5 6l4-1.500M6 8l4-1.500" fill="none" stroke="#444" /></symbol>

      <symbol id="model" viewBox="600 155 262 455">
        <g stroke="#222" stroke-width=".8" stroke-linejoin="round">
          <!-- base feet -->
          <path d="M608.700 545.300 646 546v30l-39-.7z" fill="#ffff00" />
          <path d="M816 547.500l39.700.5-1.700 30.300-38-.6z" fill="#ffff00" />
          <path d="M855.700 548 854 578.300v23l1.700-22z" fill="#33326b" />
          <ellipse cx="622.300" cy="560.700" rx="7.500" ry="2.700" fill="#9d9b00" />
          <ellipse cx="839.700" cy="562.700" rx="7.500" ry="2.700" fill="#9d9b00" />
          <!-- rear V block -->
          <path d="M685 507h16.700l30 24.300 32.600-24H779V545H685z" fill="#5b59b5" />
          <path d="M685 499.300l16.700.7 30.600 24 31-24 15.700.3v7l-14.700 0-32.600 24-30-24.300H685z" fill="#7d7bf7" />
          <path d="M701.700 500v7.300M732.300 524l-.6 7.300M763.300 500l1 7.300" fill="none" />
          <!-- upper jaw top face -->
          <path d="M664 388.800 680 375.700l104 1.600 14 13.400z" fill="#7d7bf7" />
          <!-- columns -->
          <path d="M642.300 362h43.400V383q0 4-16 5.800l16 10V525H646v40l-3.700-3.300z" fill="url(#col)" />
          <path d="M778.300 362h43.400v203.700l-4 2V525h-39.400V400l16-9.700q-16-1.500-16-6z" fill="url(#col)" />
          <!-- upper jaw -->
          <path d="M663.300 388.700l136 2V472.500h-25v-6h-6v-6h-6v-6h-6v-6h-6v-6h-6v-6h-6v-7h-13.300v6.500h-6v6h-6v6h-6v6h-6v6h-6v6h-7v6H663.300z" fill="#5b59b5" stroke="#111" />
          <!-- front V block -->
          <path d="M644.300 529h57L730 554l31.700-24.700 55 1.400v47l37.300.6v23l-247-2v-24l37.300.7z" fill="#5b59b5" />
          <path d="M644.300 522l55 .7L731 546l30.700-23.300 55.600 1v7l-55.600-1.400L730 554l-28.700-24-57-1z" fill="#7d7bf7" />
          <path d="M699.300 522.700l2 7.300M731 546l-1 8M761.700 522.700v6.600" fill="none" />
          <circle cx="662.300" cy="547.700" r="14.200" fill="#05847f" />
          <circle cx="798.300" cy="548.700" r="14.200" fill="#05847f" />
          <!-- top plate -->
          <path d="M639.300 303.300q2 5 24 7v58.200q-22-1.500-24-7z" fill="url(#plateL)" />
          <path d="M663.300 310.300l136.700 1.400V370l-136.700-1.500z" fill="#b2b000" />
          <path d="M800 311.700q23-1.200 25-6.500v57.500q-2 6-25 7.300z" fill="url(#plateR)" />
          <path d="M639.300 303.300q3-8 21-8.800l146 1.200q18 2 18.700 9.500-3 5.500-25 6.500l-136.700-1.400q-22-1.500-24-7z" fill="#ffff00" />
        </g>
        <!-- screw -->
        <path d="M714.500 371h35v13q-4 5-17.500 5t-17.500-5z" fill="#141414" />
        <path d="M715.500 373.500q17 5 34 0M714.500 379.500q17.500 5 35 0M715 385q17 5 34 0" fill="none" stroke="#5a5a5a" stroke-width="1.600" />
        <path d="M718.300 202q14-12 29.700 1v8l1 4v88q-4 5-16.500 5t-16.500-5v-88l2.300-4z" fill="#1a1a1a" />
        <g id="threads" fill="none" stroke-linecap="round"></g>
        <!-- handle -->
        <path d="M642.300 168.700l180.400 11.300-4 29.300L642.300 199z" fill="url(#bar)" stroke="#222" stroke-width=".8" />
        <path d="M718.300 208V202q14-12.500 29.700 1v7z" fill="#2b2b2b" />
        <path d="M629 165q4-3 9-1 5.500 1 6 8l-2 24q-1 7-7 7-8 0-8-8 0-24 2-30z" fill="url(#cap)" stroke="#222" stroke-width=".8" />
        <path d="M822 180q4-5 9-4.500 8 1 7.500 10l-2 22q-1.500 7-8 7-8-1-9.500-7 0-20 3-27.500z" fill="url(#cap)" stroke="#222" stroke-width=".8" />
        <ellipse cx="835" cy="194" rx="3" ry="14" transform="rotate(4 835 194)" fill="#cbc900" stroke="#222" stroke-width=".7" />
        <path d="M717 171q1 6 9 12.500 4 4.500 8 3.500 7-3 14-14z" fill="#262626" />
        <ellipse cx="732.700" cy="171.200" rx="15.500" ry="5" fill="#cdd3ee" stroke="#222" />
      </symbol>
    </svg>

    <!-- title bar -->
    <header class="h-[26px] shrink-0 flex items-stretch border-b border-[#a0a0a0]">
      <div class="ml-2 w-[116px] bg-white border-x border-[#999] flex items-center gap-[5px] pl-1">
        <svg class="w-[22px] h-[24px] shrink-0" viewBox="0 0 22 24" fill="none" stroke="#d2232a" stroke-width="1.600" stroke-linecap="round">
          <path d="M3 2.500Q9 .8 9.500 3 9.500 5.500 4 9.500" />
          <path d="M4 9.500Q10 7.500 9.800 11.500 9 17.500 1 20.500L6 11" />
          <path d="M20.500 3.500Q13 2.300 13 6.500q.3 2 3.200 4.200Q19.500 13.500 17.500 16q-2.500 3-8 2.700" />
        </svg>
        <span class="text-[12px] italic text-[#d2232a] font-['Open_Sans',sans-serif]"><b>SOLID</b><span class="font-light">WORKS</span></span>
      </div>
      <button class="w-[17px] border-r border-[#999] flex items-center justify-center" aria-label="Expand menu">
        <svg class="w-3 h-3"><use href="#tri" /></svg>
      </button>

      <div class="ml-6 flex items-center">
        <button class="w-[18px] flex justify-center" aria-label="New"><svg class="size-4"><use href="#new" /></svg></button>
        <button class="w-[13px] flex justify-center" aria-label="New options"><svg class="size-2"><use href="#down" /></svg></button>
        <button class="w-[18px] flex justify-center" aria-label="Open"><svg class="size-4"><use href="#open" /></svg></button>
        <button class="w-[13px] flex justify-center" aria-label="Open options"><svg class="size-2"><use href="#down" /></svg></button>
        <button class="w-[18px] flex justify-center" aria-label="Save"><svg class="size-4"><use href="#save" /></svg></button>
        <button class="w-[13px] flex justify-center" aria-label="Save options"><svg class="size-2"><use href="#down" /></svg></button>
        <button class="w-[18px] flex justify-center" aria-label="Print"><svg class="size-4"><use href="#print" /></svg></button>
        <button class="w-[13px] flex justify-center" aria-label="Print options"><svg class="size-2"><use href="#down" /></svg></button>
        <button class="w-[18px] flex justify-center" aria-label="Undo"><svg class="size-4"><use href="#undo" /></svg></button>
        <button class="w-[13px] flex justify-center" aria-label="Undo options"><svg class="size-2"><use href="#down" /></svg></button>
        <button class="w-[21px] h-5 flex items-center justify-center bg-[#b4b4b4] border border-[#808080]" aria-label="Select"><svg class="size-4"><use href="#cursor" /></svg></button>
        <button class="w-[10px] h-5 flex items-center justify-center border border-l-0 border-[#999]" aria-label="Select options"><svg class="size-2"><use href="#down" /></svg></button>
        <button class="w-5 flex justify-center" aria-label="Rebuild"><svg class="size-4"><use href="#light" /></svg></button>
        <button class="w-5 flex justify-center" aria-label="File properties"><svg class="size-4"><use href="#props" /></svg></button>
        <button class="w-5 flex justify-center" aria-label="Options"><svg class="size-[14px]"><use href="#gear" /></svg></button>
        <button class="w-[13px] flex justify-center" aria-label="More options"><svg class="size-2"><use href="#down" /></svg></button>
      </div>

      <h1 class="flex-1 self-center text-center">Assem5 *</h1>

      <div class="flex items-center">
        <form class="w-[162px] h-[18px] flex items-center border border-[#c4c4c4] bg-[#fafafa]">
          <svg class="ml-1 size-[13px] shrink-0" viewBox="0 0 14 14" fill="none"><circle cx="7" cy="7" r="6" stroke="#444" /><path d="M5 5.500C5 3 9 3 9 5.500 9 7 7 7 7 8.500M7 9.800v1.200" stroke="#2f7ea5" stroke-width="1.500" /></svg>
          <input id="help" type="text" aria-label="Search SOLIDWORKS Help" placeholder="Search SOLIDWORKS Help" class="ml-[3px] flex-1 min-w-0 h-[13px] bg-[#eef0f3] outline-none placeholder:text-[#666]" />
          <button type="button" class="w-[18px] flex justify-center" aria-label="Search"><svg class="size-4" viewBox="0 0 16 16" fill="none" stroke="#555"><circle cx="7" cy="6.500" r="5" stroke-width="1.300" /><path d="M10.500 10.500l4 4" stroke-width="2" /></svg></button>
          <button type="button" class="w-[9px] flex justify-center text-[#777]" aria-label="Search options"><svg class="size-2"><use href="#down" /></svg></button>
        </form>
        <button class="ml-1 w-[20px] text-[14px] font-bold" aria-label="Help">?</button>
        <button class="w-[11px] flex justify-center" aria-label="Help options"><svg class="size-2"><use href="#down" /></svg></button>
        <button class="w-[21px] flex justify-center" aria-label="Minimize"><svg class="size-4"><use href="#w-min" /></svg></button>
        <button class="w-[20px] flex justify-center" aria-label="Restore"><svg class="size-4"><use href="#w-restore" /></svg></button>
        <button class="w-[20px] flex justify-center" aria-label="Close"><svg class="size-4"><use href="#w-close" /></svg></button>
      </div>
    </header>

    <!-- standard views toolbar -->
    <div class="h-[25px] shrink-0 flex border-b border-[#a0a0a0]">
      <div class="w-[268px] flex items-center border-r border-[#999]">
        <div class="ml-[3px] h-5 border-l-2 border-dotted border-[#999]"></div>
        <button class="ml-[6px] w-[21px] flex justify-center" aria-label="Normal to"><svg class="size-4"><use href="#normal" /></svg></button>
        <div class="ml-[2px] w-px h-[18px] bg-[#999]"></div>
        <div id="views" class="ml-[3px] w-[195px] grid grid-cols-9"></div>
        <div class="ml-[2px] w-px h-[18px] bg-[#999]"></div>
        <button class="ml-1 w-[21px] flex justify-center" aria-label="View settings"><svg class="size-4"><use href="#torch" /></svg></button>
      </div>
    </div>

    <!-- command manager -->
    <div id="ribbon" class="h-[65px] shrink-0 flex pl-px"></div>

    <!-- ribbon tabs and heads-up toolbar -->
    <div class="h-[18px] shrink-0 flex items-start bg-white border-r-4 border-[#ececec]">
      <nav class="h-[18px] flex">
        <button class="w-[55px] font-bold bg-[#f6f6f6]">Assembly</button>
        <button class="w-[45px] bg-[#d4d4d4] border border-[#999]">Layout</button>
        <button class="w-[43px] bg-[#d4d4d4] border border-l-0 border-[#999]">Sketch</button>
        <button class="w-[48px] bg-[#d4d4d4] border border-l-0 border-[#999]">Evaluate</button>
        <button class="w-[107px] bg-[#d4d4d4] border border-l-0 border-[#999]">SOLIDWORKS Add-Ins</button>
        <button class="w-[59px] bg-[#d4d4d4] border border-l-0 border-[#999]">Simulation</button>
        <button class="w-[93px] bg-[#d4d4d4] border border-l-0 border-[#999]">SOLIDWORKS MBD</button>
      </nav>
      <div class="flex-1 h-[25px] flex items-center border-t border-[#999] relative z-10">
        <div id="hud" class="ml-[139px] flex items-center text-[#777]"></div>
        <div class="ml-auto mr-1 flex text-[#999]">
          <button class="w-[21px] flex justify-center" aria-label="Previous window"><svg class="size-4"><use href="#w-left" /></svg></button>
          <button class="w-[21px] flex justify-center" aria-label="Next window"><svg class="size-4"><use href="#w-right" /></svg></button>
          <button class="w-[21px] flex justify-center" aria-label="Minimize document"><svg class="size-4"><use href="#w-min" /></svg></button>
          <button class="w-[21px] flex justify-center" aria-label="Restore document"><svg class="size-4"><use href="#w-restore" /></svg></button>
          <button class="w-[21px] flex justify-center" aria-label="Close document"><svg class="size-4"><use href="#w-close" /></svg></button>
        </div>
      </div>
    </div>

    <main class="flex-1 min-h-0 flex">
      <!-- feature manager -->
      <aside class="relative z-10 w-[191px] shrink-0 flex flex-col border-r-2 border-[#c4c4c4]">
        <div class="mt-[2px] h-[18px] border-t border-[#ccc] flex items-center justify-center">
          <div class="size-[5px] rounded-full border border-[#888]"></div>
        </div>
        <div class="h-5 flex text-[#444]">
          <button class="w-8 flex items-center justify-center bg-[#f6f6f6] border-r border-[#999]" aria-label="Feature tree"><svg class="size-4"><use href="#asm" /></svg></button>
          <button class="w-8 flex items-center justify-center bg-[#d0d0d0] border border-l-0 border-[#999]" aria-label="Property manager"><svg class="size-4"><use href="#t-props" /></svg></button>
          <button class="w-8 flex items-center justify-center bg-[#d0d0d0] border border-l-0 border-[#999]" aria-label="Configurations"><svg class="size-4"><use href="#config" /></svg></button>
          <button class="w-8 flex items-center justify-center bg-[#d0d0d0] border border-l-0 border-[#999]" aria-label="Dimensions"><svg class="size-4"><use href="#target" /></svg></button>
          <button class="w-8 flex items-center justify-center bg-[#d0d0d0] border border-l-0 border-[#999]" aria-label="Display"><svg class="size-4"><use href="#ball" /></svg></button>
          <button class="flex-1 flex items-center justify-end pr-[3px]" aria-label="More tabs"><svg class="size-[9px]"><use href="#chev-right" /></svg></button>
        </div>
        <div class="h-5 mx-[2px] mt-px flex items-center border border-[#bbb]">
          <svg class="ml-px size-[15px]"><use href="#funnel" /></svg>
          <svg class="size-2"><use href="#down" /></svg>
          <input id="filter" type="text" aria-label="Filter tree" class="flex-1 min-w-0 outline-none" />
        </div>

        <div class="mt-px h-[172px] shrink-0 flex">
          <div class="flex-1 min-w-0 overflow-hidden">
            <ul id="tree" class="h-[176px] flex flex-col"></ul>
          </div>
          <div class="w-3 flex flex-col items-center pt-[3px]">
            <svg class="size-[10px]"><use href="#chev-up" /></svg>
            <div class="mt-px w-[11px] h-[72px] bg-[#cdcdcd]"></div>
            <svg class="mt-auto size-[10px]"><use href="#chev-down" /></svg>
          </div>
        </div>
        <div class="h-[14px] flex items-center bg-[#f0f0f0] pr-[14px]">
          <svg class="size-[11px]"><use href="#chev-left" /></svg>
          <div class="ml-[2px] w-[88px] h-3 bg-[#cdcdcd]"></div>
          <svg class="ml-auto size-[11px]"><use href="#chev-right" /></svg>
        </div>
        <div class="h-[14px] border-t-2 border-[#ccc] flex items-center justify-center">
          <div class="size-[5px] rounded-full border border-[#888]"></div>
        </div>
        <div class="h-[22px] pl-[81px] flex items-stretch bg-[#c9c9c9]">
          <button class="w-[22px] flex items-center justify-center bg-[#a9a9a9] border border-[#777]" aria-label="No filter"><svg class="size-[13px]"><use href="#funnel-plain" /></svg></button>
          <button class="w-[21px] flex items-center justify-center" aria-label="Filter animated"><svg class="size-[15px]"><use href="#funnel-key" /></svg></button>
          <button class="w-[21px] flex items-center justify-center" aria-label="Filter driving"><svg class="size-[15px]"><use href="#funnel-gear" /></svg></button>
          <button class="w-[21px] flex items-center justify-center" aria-label="Filter selected"><svg class="size-[15px]"><use href="#funnel-sel" /></svg></button>
          <button class="w-[21px] flex items-center justify-center" aria-label="Filter results"><svg class="size-[15px]"><use href="#funnel-off" /></svg></button>
        </div>
        <div class="flex-1 min-h-0 flex border-b border-[#ccc]">
          <div class="w-[11px] flex flex-col items-center bg-[#f0f0f0] pt-[5px]">
            <svg class="size-[10px] shrink-0"><use href="#chev-up" /></svg>
            <div class="mt-[27px] w-full flex-1 bg-[#cdcdcd]"></div>
            <svg class="mt-[2px] size-[10px] shrink-0"><use href="#chev-down" /></svg>
          </div>
          <ul id="motionTree" class="mt-[3px] h-[211px] flex-1 min-w-0 flex flex-col overflow-hidden"></ul>
        </div>
        <!-- panel flyout grip -->
        <button class="absolute -right-[8px] top-[227px] w-[7px] h-[32px] flex items-center justify-center bg-[#f6f6f6] border border-l-0 border-[#999]" aria-label="Collapse panel"><span class="size-[5px] shrink-0 rounded-full border border-[#888]"></span></button>
      </aside>

      <!-- graphics area -->
      <section class="relative flex-1 flex items-center justify-center pb-[6px] pr-[5px] bg-white border-r-4 border-[#ececec]">
        <svg class="w-[262px] h-[455px]" role="img" aria-label="Bench vice assembly"><use href="#model" /></svg>

        <div class="absolute top-[18px] right-[153px] w-[138px] h-4 bg-[#f5f9fe] text-center text-[#dfe5ec] leading-4"><span class="pr-[21px]">Full-screen Snip</span></div>

        <svg class="absolute left-[24px] bottom-[32px] w-[42px] h-[48px]" viewBox="0 0 42 48">
          <path d="M6 2l2.500 3L11 2M8.500 5v3.500" fill="none" stroke="#4aa060" />
          <path d="M8 19v18" stroke="#1c7a2e" stroke-width="2.500" /><path d="M4.500 20 8.300 10l3.700 10z" fill="#1c7a2e" />
          <path d="M8 35.500h18" stroke="#b5232b" stroke-width="2.500" /><path d="M24 32l9 3.500-9 3.500z" fill="#b5232b" />
          <path d="M33 32l4 6M37 32l-4 6" stroke="#d04a50" />
          <circle cx="8" cy="39.500" r="3.700" fill="#1010a8" /><path d="M6 38h4l-4 6h4" fill="none" stroke="#33a" stroke-width=".8" />
        </svg>

        <!-- task pane tabs -->
        <div id="pane" class="absolute -right-1 top-[23px] w-[21px] flex flex-col border border-r-0 border-[#888]"></div>
      </section>
    </main>

    <!-- motion study toolbar -->
    <div class="h-[24px] mr-1 shrink-0 flex items-center border-t border-r border-[#bbb]">
      <div class="relative ml-[2px] w-[81px] h-[17px]">
        <select id="study" aria-label="Type of study" class="size-full appearance-none bg-[#ececec] border border-[#aaa] pl-[3px] pt-px">
          <option>Animation</option>
          <option>Basic Motion</option>
          <option>Motion Analysis</option>
        </select>
        <svg class="absolute right-[2px] top-1 size-[10px] pointer-events-none"><use href="#chev-down" /></svg>
      </div>
      <div class="ml-[6px] flex">
        <button class="w-[22px] flex justify-center" aria-label="Calculate"><svg class="size-4"><use href="#m-calc" /></svg></button>
        <button class="w-[22px] flex justify-center" aria-label="Play from start"><svg class="size-4"><use href="#m-start" /></svg></button>
        <button class="w-[22px] flex justify-center" aria-label="Play"><svg class="size-4"><use href="#m-play" /></svg></button>
        <button class="w-[22px] flex justify-center" aria-label="Stop"><svg class="size-4"><use href="#m-stop" /></svg></button>
      </div>
      <input id="time" type="range" aria-label="Animation time" min="0" max="100" value="30" class="ml-[6px] mb-[3px] w-[148px] h-4 appearance-none bg-transparent [&::-webkit-slider-runnable-track]:h-1 [&::-webkit-slider-runnable-track]:bg-[#dfdfdf] [&::-webkit-slider-thumb]:appearance-none [&::-webkit-slider-thumb]:-mt-[5px] [&::-webkit-slider-thumb]:w-[9px] [&::-webkit-slider-thumb]:h-[15px] [&::-webkit-slider-thumb]:bg-[#0078d7] [&::-webkit-slider-thumb]:[clip-path:polygon(0_0,100%_0,100%_70%,50%_100%,0_70%)]" />
      <div class="ml-[6px] w-[64px] h-[18px] flex items-center justify-between bg-white border border-[#888] pl-1 pr-[2px]">
        <input id="speed" type="text" value="1x" aria-label="Playback speed" class="w-[10px] h-[11px] bg-[#3d8fe0] text-white outline-none" />
        <svg class="size-[10px]"><use href="#chev-down" /></svg>
      </div>
      <button class="w-[22px] flex justify-center" aria-label="Playback mode"><svg class="size-[15px]"><use href="#m-arrow" /></svg></button>
      <button class="w-[11px] flex justify-center" aria-label="Playback mode options"><svg class="size-2"><use href="#down" /></svg></button>
      <button class="w-[22px] flex justify-center" aria-label="Save animation"><svg class="size-4"><use href="#m-film" /></svg></button>
      <div class="ml-px mr-1 w-px h-[18px] bg-[#bbb]"></div>
      <button class="w-[22px] flex justify-center" aria-label="Animation wizard"><svg class="size-4"><use href="#m-wiz" /></svg></button>
      <div class="ml-px mr-1 w-px h-[18px] bg-[#bbb]"></div>
      <button class="w-[22px] h-[21px] flex items-center justify-center bg-[#b5b5b5] border border-[#808080]" aria-label="Autokey"><svg class="size-4"><use href="#m-key" /></svg></button>
      <button class="w-[22px] flex justify-center" aria-label="Add key"><svg class="size-[15px]"><use href="#m-addkey" /></svg></button>
      <div class="ml-px mr-[3px] w-px h-[18px] bg-[#999]"></div>
      <button class="w-[22px] flex justify-center" aria-label="Motor"><svg class="size-4"><use href="#motor" /></svg></button>
      <button class="w-[22px] flex justify-center" aria-label="Spring"><svg class="size-4"><use href="#m-spring" /></svg></button>
      <button class="w-[22px] flex justify-center" aria-label="Contact"><svg class="size-4"><use href="#m-damp" /></svg></button>
      <button class="w-[22px] flex justify-center" aria-label="Gravity"><svg class="size-4"><use href="#m-grav" /></svg></button>
      <div class="ml-px mr-[3px] w-px h-[18px] bg-[#999]"></div>
      <button class="w-[22px] flex justify-center" aria-label="Motion properties"><svg class="size-[14px]"><use href="#gear" /></svg></button>
      <div class="ml-px w-px h-[18px] bg-[#999]"></div>
      <button class="ml-auto mr-[6px]" aria-label="Expand motion manager"><svg class="size-[10px]"><use href="#chev-up" /></svg></button>
    </div>

    <!-- study tabs -->
    <div class="h-3 mr-1 shrink-0 flex">
      <div class="w-[54px] pl-px flex text-[#aaa] bg-[#d0d0d0]">
        <button class="w-[13px] flex items-center justify-center border border-[#aaa] bg-[#c8c8c8]" aria-label="First tab"><svg class="size-2" viewBox="0 0 8 8" fill="currentColor"><path d="M1 1h1v6H1zM7 1v6L3 4z" /></svg></button>
        <button class="w-[13px] flex items-center justify-center border border-[#aaa] bg-[#c8c8c8]" aria-label="Previous tab"><svg class="size-2" viewBox="0 0 8 8" fill="currentColor"><path d="M6 1v6L2 4z" /></svg></button>
        <button class="w-[13px] flex items-center justify-center border border-[#aaa] bg-[#c8c8c8]" aria-label="Next tab"><svg class="size-2" viewBox="0 0 8 8" fill="currentColor"><path d="M2 1v6l4-3z" /></svg></button>
        <button class="w-[13px] flex items-center justify-center border border-[#aaa] bg-[#c8c8c8]" aria-label="Last tab"><svg class="size-2" viewBox="0 0 8 8" fill="currentColor"><path d="M6 1h1v6H6zM1 1v6l4-3z" /></svg></button>
      </div>
      <button class="w-[45px] pl-1 bg-[#d4d4d4] border-r border-b border-[#999]">Model</button>
      <button class="w-[55px] bg-[#d4d4d4] border-r border-b border-[#999]">3D Views</button>
      <button class="w-[85px] pr-[7px] font-bold">Motion Study 1</button>
      <div class="flex-1 border border-[#999]"></div>
    </div>

    <!-- status bar -->
    <footer class="h-[15px] shrink-0 flex items-center pl-px pr-[2px]">
      <span>SOLIDWORKS Education Edition - Instructional Use Only</span>
      <span class="ml-auto pr-[6px] border-r border-[#ddd]">Under Defined</span>
      <span class="ml-[5px] pl-[2px] pr-[5px] border-x border-[#ddd]">Editing Assembly</span>
      <span class="ml-3 pl-[24px] border-l border-[#ddd]">MMGS</span>
      <button class="ml-3 rotate-180" aria-label="Units"><svg class="size-2"><use href="#down" /></svg></button>
      <svg class="ml-[52px] size-[14px]"><use href="#brush" /></svg>
    </footer>

    <!-- taskbar -->
    <div class="h-8 shrink-0 flex items-stretch bg-[#02040a] text-white">
      <button class="w-[38px] flex items-center justify-center" aria-label="Start">
        <svg class="size-[14px]" viewBox="0 0 14 14" fill="#fff"><path d="M0 2l6-.9v5.500H0zM6.700 1 14 0v6.600H6.700zM0 7.300h6V13l-6-.9zM6.700 7.300H14V14l-7.300-1z" /></svg>
      </button>
      <div class="w-[276px] flex items-center bg-[#323232]">
        <span class="ml-2 size-[17px] rounded-full border-[3px] border-white"></span>
        <input id="cortana" type="text" aria-label="Cortana search" placeholder="I'm Cortana. Ask me anything." class="ml-[7px] flex-1 h-4 text-[11px] outline-none placeholder:text-[#a0a0a0]" />
      </div>
      <button class="w-[38px] flex items-center justify-center" aria-label="Task view">
        <svg class="w-[18px] h-[14px]" viewBox="0 0 18 14" fill="none" stroke="#fff" stroke-width="1.300"><path d="M4 1.500h9.500v11H4zM2.500 3H1v8h1.500M15 3h1.500v8H15" /></svg>
      </button>
      <button class="ml-[5px] w-8 flex items-center justify-center border-b-2 border-[#76b0e0]" aria-label="Filmora">
        <svg class="size-[18px]" viewBox="0 0 18 18"><rect x="1" width="16" height="17" rx="3" fill="#173544" /><path d="M1 13h16v1.500a3 3 0 0 1-3 3H4a3 3 0 0 1-3-3z" fill="#fff" /><path d="M6 2l3-1 4 5-4 5-2-1 2-3-3-3z" fill="#4fd8c8" /><path d="M5 4.500 8 2l2 2-2.500 2z" fill="#fff" /></svg>
      </button>
      <button class="ml-1 w-[38px] flex items-center justify-center bg-[#34363b] border-b-2 border-[#76b0e0]" aria-label="SOLIDWORKS 2017">
        <svg class="size-[20px]" viewBox="0 0 20 20"><path d="M1 4 8 1l11 2v10L11 16 1 13z" fill="#c4161c" /><path d="M1 4l10 1.500L19 3 8 1z" fill="#ef5a57" /><path d="M11 5.500V16" stroke="#7c0a0e" /><text x="3" y="12" font-size="8" font-weight="bold" fill="#fff">S</text><text x="11" y="12" font-size="7" font-weight="bold" fill="#fff">W</text><text x="6" y="19" font-size="6" font-weight="bold" fill="#fff">2017</text></svg>
      </button>
      <div class="ml-auto flex items-center">
        <svg class="size-[11px]"><use href="#chev-up" /></svg>
        <svg class="ml-[7px] size-[14px]" viewBox="0 0 14 14" fill="none" stroke="#fff"><path d="M4 3.500h9.500v6H4M8.500 9.500V12M5.500 12.500h6M.5 1.500h4v3h-4zM2.500 4.500v6" /></svg>
        <svg class="ml-[5px] size-[14px]" viewBox="0 0 14 14" fill="none" stroke="#fff"><path d="M1 5h2l3-3v10L3 9H1zM8 5q1.500 2 0 4M10 3.500q2.500 3.500 0 7M12 2q3.500 5 0 10" /></svg>
        <svg class="ml-[6px] size-[14px]" viewBox="0 0 14 14"><path d="M1 1.500h12v9H7.500v3l-3-3H1z" fill="#fff" /><path d="M3 4.500h8M3 7h8" stroke="#02040a" /></svg>
      </div>
      <div class="ml-[9px] w-[42px] self-center text-center leading-[13px]">4:28 PM<br />7/24/2021</div>
      <div class="ml-2 mr-[3px] border-l border-[#555]"></div>
    </div>

    <script>
      const views = ["front", "back", "left", "right", "top", "bottom", "iso", "tri", "di"];
      document.getElementById("views").innerHTML = views
        .map(v => `<button class="flex justify-center" aria-label="${v} view"><svg class="size-4"><use href="#cube-${v}" /></svg></button>`)
        .join("");

      // [width class, icon, label lines, state]
      const commands = [
        ["w-[59px]", "r-edit", "Edit<br>Component", "off"],
        ["w-[58px]", "r-insert", "Insert<br>Components", "menu"],
        ["w-[32px]", "r-mate", "Mate", ""],
        ["w-[54px]", "r-preview", "Component<br>Preview<br>Window", "off"],
        ["w-[86px]", "r-linear", "Linear Component<br>Pattern", "menu"],
        ["w-[47px]", "r-smart", "Smart<br>Fasteners", ""],
        ["w-[57px]", "r-move", "Move<br>Component", "menu"],
        null,
        ["w-[62px]", "r-show", "Show<br>Hidden<br>Components", ""],
        null,
        ["w-[48px]", "r-feat", "Assembly<br>Features", "menu"],
        ["w-[48px]", "r-ref", "Reference<br>Geometry", "menu"],
        null,
        ["w-[40px]", "r-motion", "New<br>Motion<br>Study", ""],
        null,
        ["w-[47px]", "r-bom", "Bill of<br>Materials", ""],
        null,
        ["w-[47px]", "r-expl", "Exploded<br>View", ""],
        ["w-[42px]", "r-expl-off", "Explode<br>Line<br>Sketch", "off"],
        ["w-[50px]", "r-instant", "Instant3D", "on"],
        ["w-[51px]", "r-speed", "Update<br>Speedpak", ""],
        null,
        ["w-[48px]", "r-snap", "Take<br>Snapshot", ""],
        ["w-[46px]", "asm", "Large<br>Assembly<br>Mode", ""],
      ];
      const states = {
        "": "pt-[10px] text-[#222]",
        menu: "pt-[5px] text-[#222]",
        off: "pt-[10px] text-[#b8b8b8]",
        on: "pt-[9px] text-[#222] bg-[#b0b0b0] border border-[#888]",
      };
      document.getElementById("ribbon").innerHTML = commands
        .map(c => {
          if (!c) return `<div class="w-px my-px bg-[#ccc]"></div>`;
          const [width, icon, label, state] = c;
          const arrow = state === "menu" ? `<svg class="size-2 mt-auto mb-[6px]"><use href="#down" /></svg>` : "";
          return `<button class="${width} ${states[state]} shrink-0 flex flex-col items-center whitespace-nowrap"><svg class="size-4 shrink-0"><use href="#${icon}" /></svg><span>${label}</span>${arrow}</button>`;
        })
        .join("");

      const hud = ["h-zoom", "h-area", "h-prev", "h-section", "h-dyn", "h-style", "", "h-shade", "", "h-eye", "", "h-paint", "h-scene", "", "h-monitor", ""];
      document.getElementById("hud").innerHTML = hud
        .map(h => h
          ? `<button class="w-[21px] flex justify-center opacity-85" aria-label="${h.slice(2)}"><svg class="size-4"><use href="#${h}" /></svg></button>`
          : `<button class="w-[11px] flex justify-center" aria-label="options"><svg class="size-2"><use href="#down" /></svg></button>`)
        .join("");

      const pane = ["t-home", "t-lib", "t-folder", "t-palette", "ball", "t-props", "t-chat"];
      document.getElementById("pane").innerHTML = pane
        .map(p => `<button class="h-[19px] flex items-center justify-center border-b border-[#888] last:border-b-0 ${p === "ball" ? "bg-white" : "bg-[#d4d4d4]"}" aria-label="${p}"><svg class="size-4"><use href="#${p}" /></svg></button>`)
        .join("");

      const arrow = `<svg class="size-[7px] text-[#555]"><use href="#tri" /></svg>`;

      // [expandable, icon, has cap, label]
      const tree = [
        [1, "history", 0, "History"],
        [0, "sensors", 0, "Sensors"],
        [1, "annot", 0, "Annotations"],
        [0, "plane", 0, "Front Plane"],
        [0, "plane", 0, "Top Plane"],
        [0, "plane", 0, "Right Plane"],
        [0, "origin", 0, "Origin"],
        [1, "part", 1, "(-) Bolt&lt;1&gt; (Default&lt;&lt;Defau"],
        [1, "part", 1, "(-) column support&lt;1&gt; (Def"],
      ];
      document.getElementById("tree").innerHTML =
        `<li class="flex-1 flex items-center whitespace-nowrap pl-px"><svg class="size-4 shrink-0"><use href="#asm" /></svg><svg class="size-4 ml-[3px] mr-[3px] shrink-0"><use href="#hat" /></svg><span class="whitespace-pre">Assem5  (Default&lt;Display State-1</span></li>` +
        tree
          .map(([open, icon, cap, label]) => `<li class="flex-1 flex items-center whitespace-nowrap"><span class="w-[19px] pl-1 shrink-0">${open ? arrow : ""}</span><svg class="size-4 mr-[3px] shrink-0"><use href="#${icon}" /></svg>${cap ? `<svg class="size-4 mr-1 shrink-0"><use href="#hat" /></svg>` : ""}<span>${label}</span></li>`)
          .join("");

      const motion = [
        [1, "lights", "Lights, Cameras and Scene"],
        [0, "motor", "RotaryMotor1"],
        [1, "part", "(-) Bolt&lt;1&gt; (Default&lt;&lt;Defau"],
        [1, "part", "(-) column support&lt;1&gt; (Def"],
        [1, "part", "(f) Fixed lower jaw&lt;1&gt; (Defa"],
        [1, "part", "(-) Handel&lt;1&gt; (Default&lt;&lt;De"],
        [1, "part", "(-) scrwe&lt;1&gt; (Default&lt;&lt;Def"],
        [1, "part", "Top plate&lt;1&gt; (Default&lt;&lt;De"],
        [1, "part", "(-) upper jaw&lt;1&gt; (Default&lt;&lt;"],
        [1, "part", "(-) Bolt&lt;2&gt; (Default&lt;&lt;Defau"],
        [1, "part", "column support&lt;2&gt; (Defaul"],
        [1, "mates", "Mates"],
      ];
      document.getElementById("motionTree").innerHTML = motion
        .map(([open, icon, label]) => `<li class="flex-1 flex items-center whitespace-nowrap"><span class="w-10 pl-6 shrink-0">${open ? arrow : ""}</span><svg class="size-4 mr-[3px] shrink-0"><use href="#${icon}" /></svg><span>${label}</span></li>`)
        .join("");

      // screw threads, evenly pitched down the shaft
      let threads = "";
      for (let y = 213; y < 306; y += 5.8) {
        threads += `<path d="M716 ${y}q16.500 5 33 0" stroke="#111" stroke-width="4" /><path d="M716 ${y}q16.500 5 33 0" stroke="#5c5c5c" stroke-width="1.800" />`;
      }
      document.getElementById("threads").innerHTML = threads;
    </script>
  </body>
</html>
